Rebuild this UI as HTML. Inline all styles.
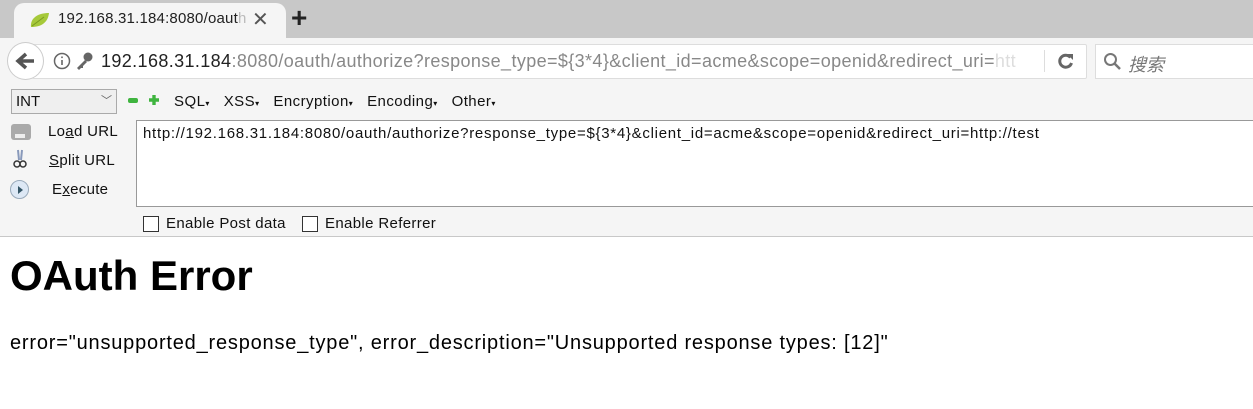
<!DOCTYPE html>
<html><head><meta charset="utf-8"><style>
*{margin:0;padding:0;box-sizing:border-box}
body{width:1253px;height:409px;overflow:hidden;background:#fff;font-family:"Liberation Sans","Noto Sans CJK SC",sans-serif;position:relative}
.a{position:absolute;white-space:nowrap}
</style></head><body>
<div class="a" style="left:0;top:0;width:1253px;height:38px;background:#c8c8c8"></div>
<div class="a" style="left:14px;top:3px;width:272px;height:36px;background:#f5f5f5;border-radius:10px 10px 0 0"></div>
<svg class="a" style="left:28px;top:10px" width="24" height="20"><path d="M3 17 C2 8 10 3 21 3 C20 12 14 17 3 17Z" fill="#a6c93a"/><path d="M4 16 L16 7" stroke="#7a9a20" stroke-width="1"/></svg>
<div class="a" style="left:58px;top:10px;font-size:15px;color:#222;letter-spacing:0.2px">192.168.31.184:8080/oaut<span style="color:#bbb">h</span></div>
<div class="a" style="left:252px;top:7px;font-size:20px;color:#555">✕</div>
<div class="a" style="left:291px;top:2px;font-size:28px;color:#222;font-weight:bold">+</div>
<div class="a" style="left:0;top:38px;width:1253px;height:199px;background:#f5f5f5;border-bottom:1px solid #c8c8c8"></div>
<div class="a" style="left:32px;top:44px;width:1055px;height:35px;background:#fff;border:1px solid #ddd;border-radius:2px"></div>
<div class="a" style="left:7px;top:42px;width:37px;height:38px;background:#fff;border:1px solid #ccc;border-radius:50%"></div>
<svg class="a" style="left:15px;top:51px" width="22" height="20"><path d="M11 3 L3 10 L11 17 M3 10 H19" stroke="#555" stroke-width="3.5" fill="none"/></svg>
<svg class="a" style="left:53px;top:52px" width="18" height="18"><circle cx="9" cy="9" r="7.5" stroke="#666" stroke-width="1.5" fill="none"/><rect x="8.2" y="8" width="1.6" height="5" fill="#666"/><rect x="8.2" y="4.5" width="1.6" height="1.6" fill="#666"/></svg>
<svg class="a" style="left:74px;top:51px" width="20" height="20"><circle cx="14" cy="6" r="4.5" fill="#666"/><path d="M11 9 L3 17 L5 19 L7 17 L9 17 L9 15 L13 11Z" fill="#666"/></svg>
<div class="a" style="left:101px;top:51px;font-size:18px;color:#222;letter-spacing:0.38px">192.168.31.184<span style="color:#888">:8080/oauth/authorize?response_type=${3*4}&amp;client_id=acme&amp;scope=openid&amp;redirect_uri=</span><span style="color:#ddd">htt</span></div>
<div class="a" style="left:1044px;top:50px;width:1px;height:22px;background:#ddd"></div>
<svg class="a" style="left:1056px;top:51px" width="20" height="20"><path d="M14.5 6.5 A6 6 0 1 0 15.5 12" stroke="#666" stroke-width="3" fill="none"/><path d="M11 3 L17 3 L17 9Z" fill="#666"/></svg>
<div class="a" style="left:1095px;top:44px;width:170px;height:35px;background:#fff;border:1px solid #ddd"></div>
<svg class="a" style="left:1103px;top:52px" width="20" height="20"><circle cx="7.5" cy="7.5" r="5.5" stroke="#777" stroke-width="2" fill="none"/><path d="M11.5 11.5 L17 17" stroke="#777" stroke-width="2.5"/></svg>
<div class="a" style="left:1128px;top:51px;font-size:18px;color:#777;font-style:italic">搜索</div>
<div class="a" style="left:11px;top:89px;width:106px;height:25px;background:#efefef;border:1px solid #aaa"></div>
<div class="a" style="left:16px;top:93px;font-size:15px;color:#111">INT</div>
<div class="a" style="left:101px;top:92px;font-size:11px;color:#666">﹀</div>
<div class="a" style="left:128px;top:98px;width:10px;height:5px;background:#3fb43f;border-radius:2px"></div>
<div class="a" style="left:149px;top:95px;width:10px;height:10px;background:#3fb43f;clip-path:polygon(33% 0,67% 0,67% 33%,100% 33%,100% 67%,67% 67%,67% 100%,33% 100%,33% 67%,0 67%,0 33%,33% 33%)"></div>
<div class="a" style="left:174px;top:93px;font-size:15px;color:#111;letter-spacing:0.45px">SQL<span style="font-size:8px">▾</span>&nbsp;&nbsp; XSS<span style="font-size:8px">▾</span>&nbsp;&nbsp; Encryption<span style="font-size:8px">▾</span>&nbsp;&nbsp; Encoding<span style="font-size:8px">▾</span>&nbsp;&nbsp; Other<span style="font-size:8px">▾</span></div>
<div class="a" style="left:11px;top:124px;width:20px;height:16px;background:#aaa;border-radius:3px"></div>
<div class="a" style="left:15px;top:134px;width:10px;height:4px;background:#eee"></div>
<div class="a" style="left:48px;top:123px;font-size:15px;color:#111;letter-spacing:0.3px">Lo<u>a</u>d URL</div>
<svg class="a" style="left:12px;top:148px" width="16" height="22"><path d="M6 2 L7 12 M10 2 L9 12" stroke="#8899bb" stroke-width="2"/><circle cx="5" cy="16" r="3" stroke="#333" stroke-width="1.5" fill="none"/><circle cx="11" cy="16" r="3" stroke="#333" stroke-width="1.5" fill="none"/></svg>
<div class="a" style="left:49px;top:152px;font-size:15px;color:#111;letter-spacing:0.3px"><u>S</u>plit URL</div>
<div class="a" style="left:10px;top:180px;width:19px;height:19px;border-radius:50%;background:#dde8f5;border:1px solid #9ab"></div>
<div class="a" style="left:18px;top:186px;width:0;height:0;border-left:5px solid #356;border-top:4px solid transparent;border-bottom:4px solid transparent"></div>
<div class="a" style="left:52px;top:181px;font-size:15px;color:#111;letter-spacing:0.3px">E<u>x</u>ecute</div>
<div class="a" style="left:136px;top:120px;width:1120px;height:87px;background:#fff;border:1px solid #999"></div>
<div class="a" style="left:143px;top:125px;font-size:15px;color:#111;letter-spacing:0.72px">http://192.168.31.184:8080/oauth/authorize?response_type=${3*4}&amp;client_id=acme&amp;scope=openid&amp;redirect_uri=http://test</div>
<div class="a" style="left:143px;top:216px;width:16px;height:16px;background:#fff;border:1px solid #333"></div>
<div class="a" style="left:166px;top:215px;font-size:15px;color:#111;letter-spacing:0.35px">Enable Post data</div>
<div class="a" style="left:302px;top:216px;width:16px;height:16px;background:#fff;border:1px solid #333"></div>
<div class="a" style="left:325px;top:215px;font-size:15px;color:#111;letter-spacing:0.35px">Enable Referrer</div>
<div class="a" style="left:10px;top:252px;font-size:42px;font-weight:bold;color:#000">OAuth Error</div>
<div class="a" style="left:10px;top:332px;font-size:20px;color:#000;letter-spacing:0.8px">error="unsupported_response_type", error_description="Unsupported response types: [12]"</div>
</body></html>
